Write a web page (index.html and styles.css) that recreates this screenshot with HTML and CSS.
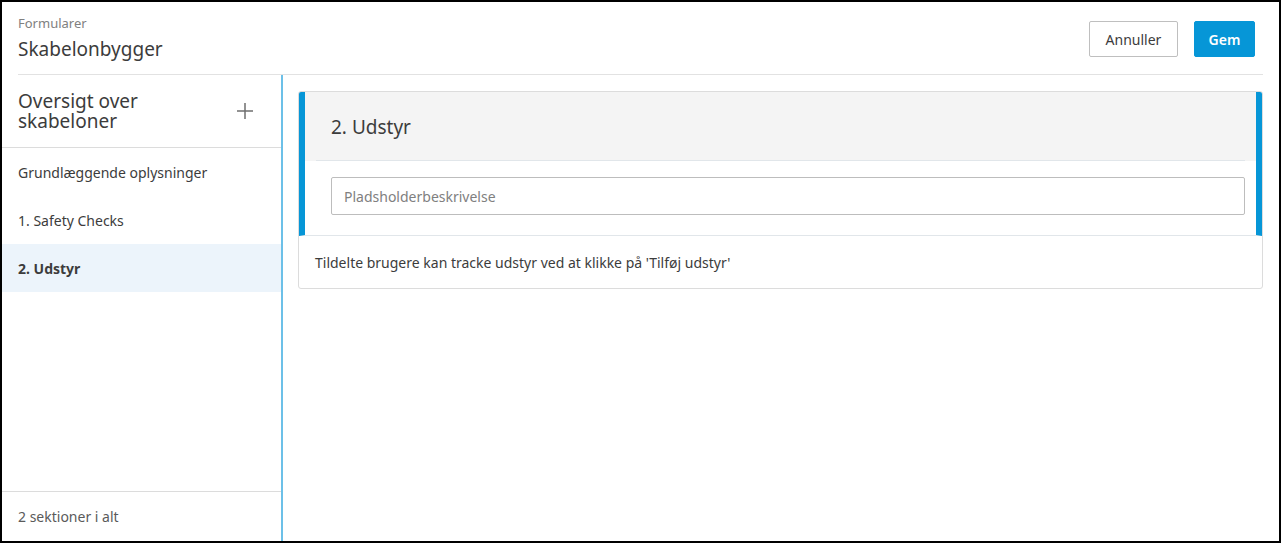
FILE: index.html
```html
<!DOCTYPE html>
<html lang="da">
<head>
<meta charset="utf-8">
<title>Skabelonbygger</title>
<link rel="stylesheet" href="styles.css">
</head>
<body>
<div class="app">
  <header class="topbar">
    <div class="titles">
      <div class="crumb">Formularer</div>
      <h1 class="page-title">Skabelonbygger</h1>
    </div>
    <div class="actions">
      <button class="btn btn-secondary">Annuller</button>
      <button class="btn btn-primary">Gem</button>
    </div>
  </header>
  <div class="body">
    <aside class="sidebar">
      <div class="side-head">
        <h2 class="side-title">Oversigt over skabeloner</h2>
        <button class="add-btn" aria-label="Tilføj">
          <svg width="16" height="16" viewBox="0 0 16 16"><path d="M8 0v16M0 8h16" stroke="#6f6f6f" stroke-width="1.5" fill="none"/></svg>
        </button>
      </div>
      <nav class="side-list">
        <div class="side-item">Grundlæggende oplysninger</div>
        <div class="side-item">1. Safety Checks</div>
        <div class="side-item active">2. Udstyr</div>
      </nav>
      <div class="side-foot">2 sektioner i alt</div>
    </aside>
    <main class="main">
      <section class="card">
        <div class="card-selected">
          <div class="card-head">
            <h3 class="card-title">2. Udstyr</h3>
          </div>
          <div class="card-fields">
            <input class="desc-input" type="text" placeholder="Pladsholderbeskrivelse">
          </div>
        </div>
        <div class="card-note">Tildelte brugere kan tracke udstyr ved at klikke på 'Tilføj udstyr'</div>
      </section>
    </main>
  </div>
</div>
</body>
</html>
```
FILE: styles.css
```css
* { box-sizing: border-box; }
html, body { margin: 0; padding: 0; }
body {
  font-family: "Noto Sans", "Open Sans", sans-serif;
  color: #3c3c3c;
  background: #fff;
}
.app {
  width: 1281px;
  height: 543px;
  border: 2px solid #000;
  display: flex;
  flex-direction: column;
  overflow: hidden;
}
.topbar {
  margin: 0 16px;
  height: 73px;
  border-bottom: 1px solid #e2e2e2;
  display: flex;
  justify-content: space-between;
  align-items: flex-start;
  flex-shrink: 0;
}
.titles { padding-top: 12px; }
.crumb { font-size: 13px; color: #808080; line-height: 18px; }
.page-title { margin: 4px 0 0; font-size: 19px; font-weight: 400; color: #3c3c3c; line-height: 26px; }
.actions { display: flex; gap: 16px; padding-top: 19px; padding-right: 8px; }
.btn {
  height: 36px;
  font-family: inherit;
  font-size: 14px;
  border-radius: 2px;
  padding: 0;
  cursor: pointer;
}
.btn-secondary { background: #fff; border: 1px solid #bfbfbf; color: #3c3c3c; width: 89px; }
.btn-primary { background: #0696d7; border: 1px solid #0696d7; color: #fff; font-weight: 600; width: 61px; }
.body { flex: 1; display: flex; min-height: 0; }
.sidebar {
  width: 281px;
  border-right: 2px solid #6cc0e8;
  display: flex;
  flex-direction: column;
  flex-shrink: 0;
}
.side-head {
  height: 73px;
  border-bottom: 1px solid #dcdcdc;
  display: flex;
  align-items: center;
  justify-content: space-between;
  padding: 0 28px 1px 16px;
  flex-shrink: 0;
}
.side-title { margin: 0; font-size: 19px; font-weight: 400; line-height: 20px; color: #3c3c3c; width: 160px; }
.add-btn { background: none; border: 0; padding: 0; width: 16px; height: 16px; display: flex; }
.side-list { flex: 1; }
.side-item {
  height: 48px;
  display: flex;
  align-items: center;
  padding-left: 16px;
  font-size: 14px;
  color: #3c3c3c;
}
.side-item.active { background: #ecf4fb; font-weight: 700; }
.side-foot {
  height: 50px;
  border-top: 1px solid #dcdcdc;
  display: flex;
  align-items: center;
  padding-left: 16px;
  padding-bottom: 1px;
  font-size: 14px;
  color: #5a5a5a;
  flex-shrink: 0;
}
.main { flex: 1; padding: 16px 16px 0 15px; }
.card {
  border: 1px solid #dcdcdc;
  border-radius: 3px;
  overflow: hidden;
}
.card-selected {
  border-left: 6px solid #0696d7;
  border-right: 6px solid #0696d7;
  border-bottom: 1px solid #e1e6ea;
}
.card-head {
  background: #f4f4f4;
  height: 69px;
  display: flex;
  align-items: center;
  padding-left: 26px;
  position: relative;
}
.card-head::after {
  content: "";
  position: absolute;
  left: 11px; right: 11px; bottom: 0;
  height: 1px;
  background: #e1e6ea;
}
.card-title { margin: 0; font-size: 19px; font-weight: 400; color: #3c3c3c; }
.card-fields { padding: 16px 11px 20px 26px; }
.desc-input {
  display: block;
  width: 100%;
  height: 38px;
  border: 1px solid #bdbdbd;
  border-radius: 2px;
  padding: 0 12px;
  font-family: inherit;
  font-size: 14px;
  color: #3c3c3c;
}
.desc-input::placeholder { color: #808080; }
.card-note {
  height: 52px;
  display: flex;
  align-items: center;
  padding-left: 16px;
  font-size: 14px;
  color: #3c3c3c;
}
```
